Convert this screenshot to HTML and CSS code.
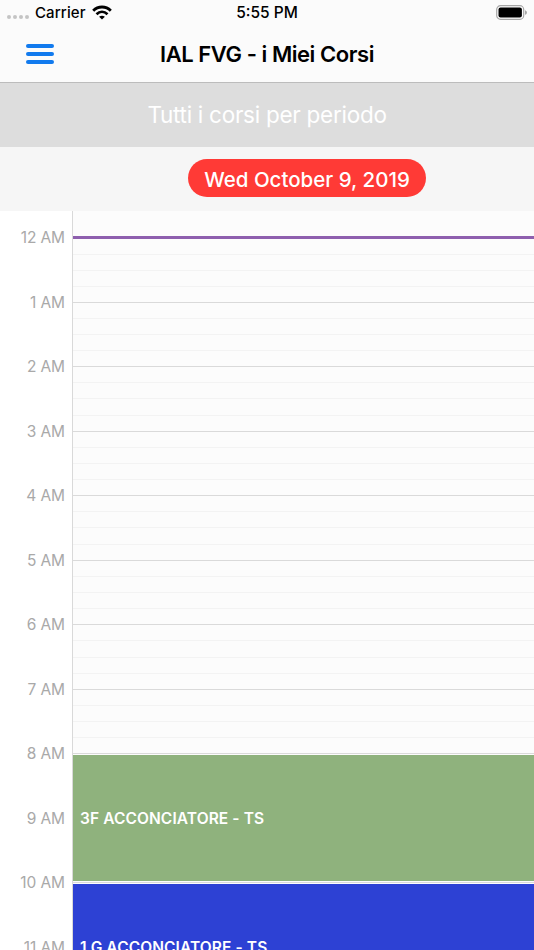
FILE: index.html
```html
<!DOCTYPE html>
<html lang="it">
<head>
  <meta charset="UTF-8">
  <meta name="viewport" content="width=device-width, initial-scale=1.0">

  <title>IAL FVG - i Miei Corsi</title>

  <link rel="stylesheet" href="styles.css">
</head>
<body>

<header class="header">
  <div class="status-bar">
    <div class="status-left">
      <div class="signal"><i></i><i></i><i></i><i></i></div>
      <span class="carrier">Carrier</span>
      <svg class="wifi" width="20" height="15" viewBox="0 0 20 15">
        <path d="M1.2 5.7 C6.2 0.8 13.8 0.8 18.8 5.7" fill="none" stroke="#000" stroke-width="2.9"/>
        <path d="M4.5 9.2 C7.8 6.1 12.2 6.1 15.5 9.2" fill="none" stroke="#000" stroke-width="2.7"/>
        <path d="M10 14.6 L7.1 11.7 C8.8 10.3 11.2 10.3 12.9 11.7 Z"/>
      </svg>
    </div>
    <span class="clock">5:55 PM</span>
    <div class="status-right">
      <svg width="32" height="15" viewBox="0 0 32 15">
        <rect x="0.7" y="0.7" width="27" height="13.6" rx="3.8" fill="#fcfcfc" stroke="#a6a6a6" stroke-width="1.2"/>
        <rect x="2.5" y="2.5" width="23.4" height="10" rx="2"/>
        <path d="M29 5.2 C31.6 6 31.6 9 29 9.8 Z" fill="#a6a6a6"/>
      </svg>
    </div>
  </div>

  <div class="nav-bar">
    <button class="menu" aria-label="Menu"><i></i><i></i><i></i></button>
    <h1 class="title">IAL FVG - i Miei Corsi</h1>
  </div>
</header>

<div class="period">Tutti i corsi per periodo</div>

<div class="date-bar">
  <div class="date">Wed October 9, 2019</div>
</div>

<div class="calendar">
  <div class="times">
    <div class="time">12 AM</div>
    <div class="time">1 AM</div>
    <div class="time">2 AM</div>
    <div class="time">3 AM</div>
    <div class="time">4 AM</div>
    <div class="time">5 AM</div>
    <div class="time">6 AM</div>
    <div class="time">7 AM</div>
    <div class="time">8 AM</div>
    <div class="time">9 AM</div>
    <div class="time">10 AM</div>
    <div class="time">11 AM</div>
  </div>

  <div class="day">
    <div class="hour now"><i></i><i></i><i></i><i></i></div>
    <div class="hour"><i></i><i></i><i></i><i></i></div>
    <div class="hour"><i></i><i></i><i></i><i></i></div>
    <div class="hour"><i></i><i></i><i></i><i></i></div>
    <div class="hour"><i></i><i></i><i></i><i></i></div>
    <div class="hour"><i></i><i></i><i></i><i></i></div>
    <div class="hour"><i></i><i></i><i></i><i></i></div>
    <div class="hour"><i></i><i></i><i></i><i></i></div>
    <div class="slot"><div class="event green">3F ACCONCIATORE - TS</div></div>
    <div class="slot"><div class="event blue">1 G ACCONCIATORE - TS</div></div>
  </div>
</div>

</body>
</html>
```

FILE: styles.css
```css
* {
  box-sizing: border-box;
}

body {
  margin: 0;
  height: 950px;
  overflow: hidden;
  display: flex;
  flex-direction: column;
  font-family: Inter, "Liberation Sans", sans-serif;
  background-color: #fff;
}

.header {
  flex: none;
  height: 83px;
  background-color: #fbfbfb;
  border-bottom: 1px solid #bcbcbc;
}

.status-bar {
  display: grid;
  grid-template-columns: 1fr auto 1fr;
  align-items: center;
  height: 25px;
  padding: 0 6px 0 7px;
  font-size: 15.5px;
  font-weight: 500;
}

.status-left {
  display: flex;
  align-items: center;
}

.signal {
  display: flex;
  gap: 2px;
  margin-top: 9px;
}

.signal i {
  width: 4px;
  height: 4px;
  border-radius: 50%;
  background-color: #c4c4c4;
}

.carrier {
  margin-left: 6px;
  font-size: 15px;
  letter-spacing: 0.1px;
}

.wifi {
  margin-left: 6px;
}

.clock {
  margin-right: 1px;
}

.status-right {
  display: flex;
  justify-content: flex-end;
}

.nav-bar {
  display: grid;
  grid-template-columns: 80px 1fr 80px;
  align-items: center;
  height: 57px;
}

.menu {
  display: flex;
  flex-direction: column;
  gap: 4px;
  width: 28px;
  margin-left: 26px;
  padding: 0;
  border: 0;
  background: none;
}

.menu i {
  width: 28px;
  height: 4px;
  border-radius: 2px;
  background-color: #117aee;
}

.title {
  margin: 0;
  font-size: 22px;
  font-weight: 600;
  letter-spacing: -0.45px;
  text-align: center;
  white-space: nowrap;
}

.period {
  flex: none;
  height: 64px;
  line-height: 64px;
  font-size: 22.5px;
  letter-spacing: -0.27px;
  text-align: center;
  color: #fff;
  background-color: #ddd;
}

.date-bar {
  flex: none;
  display: flex;
  justify-content: center;
  height: 64px;
  padding: 12px 0 0 80px;
  background-color: #f6f6f6;
}

.date {
  width: 238px;
  height: 38px;
  line-height: 41px;
  border-radius: 19px;
  font-size: 20.5px;
  font-weight: 500;
  text-align: center;
  color: #fff;
  background-color: #ff3a36;
}

.calendar {
  display: flex;
  flex: 1;
  min-height: 0;
  overflow: hidden;
}

.times {
  width: 72px;
  padding-right: 7px;
}

.time {
  height: 64.55px;
  line-height: 54px;
  font-size: 15.5px;
  letter-spacing: -0.1px;
  text-align: right;
  color: #a9a9a9;
}

.day {
  flex: 1;
  padding-top: 26px;
  border-left: 1px solid #d9d9d9;
  background-color: #fcfcfc;
}

.hour {
  display: flex;
  flex-direction: column;
  height: 64.55px;
  border-top: 1px solid #dadada;
}

.hour i {
  flex: 1;
  border-top: 1px solid #f3f3f3;
}

.hour i:first-child {
  border-top: 0;
}

.now {
  margin-top: -1px;
  height: 65.55px;
  border-top: 3px solid #8e5fae;
}

.slot {
  height: 129.1px;
  padding: 0.6px 0 1.2px;
  border-top: 1px solid #dadada;
}

.event {
  height: 100%;
  padding-left: 7px;
  line-height: 127px;
  font-size: 15.5px;
  font-weight: 600;
  letter-spacing: 0.1px;
  color: #fff;
}

.green {
  background-color: #8fb27d;
}

.blue {
  background-color: #2d41d4;
}
```
